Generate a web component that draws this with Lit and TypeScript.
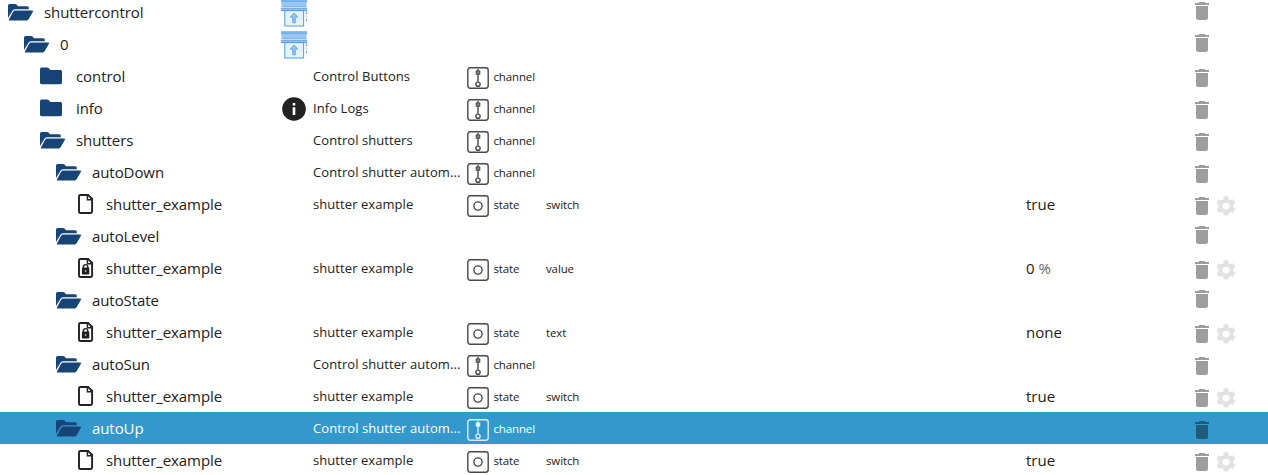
import { LitElement, html, svg, css, nothing } from "lit";
import { customElement } from "lit/decorators.js";
import { classMap } from "lit/directives/class-map.js";
import { styleMap } from "lit/directives/style-map.js";

type Kind = "open" | "closed" | "file" | "locked";

interface Row {
  id: string;
  kind: Kind;
  depth: number;
  icon?: "shutter" | "info";
  name?: string;
  type?: "channel" | "state";
  role?: string;
  value?: string;
  unit?: string;
  selected?: boolean;
}

const AUTOM = "Control shutter autom...";

const leaf = (role: string, value: string, kind: Kind = "file", unit = ""): Row => ({
  id: "shutter_example", kind, depth: 4, name: "shutter example", type: "state", role, value, unit,
});

const ROWS: Row[] = [
  { id: "shuttercontrol", kind: "open", depth: 0, icon: "shutter" },
  { id: "0", kind: "open", depth: 1, icon: "shutter" },
  { id: "control", kind: "closed", depth: 2, name: "Control Buttons", type: "channel" },
  { id: "info", kind: "closed", depth: 2, icon: "info", name: "Info Logs", type: "channel" },
  { id: "shutters", kind: "open", depth: 2, name: "Control shutters", type: "channel" },
  { id: "autoDown", kind: "open", depth: 3, name: AUTOM, type: "channel" },
  leaf("switch", "true"),
  { id: "autoLevel", kind: "open", depth: 3 },
  leaf("value", "0", "locked", "%"),
  { id: "autoState", kind: "open", depth: 3 },
  leaf("text", "none", "locked"),
  { id: "autoSun", kind: "open", depth: 3, name: AUTOM, type: "channel" },
  leaf("switch", "true"),
  { id: "autoUp", kind: "open", depth: 3, name: AUTOM, type: "channel", selected: true },
  leaf("switch", "true"),
];

const folderOpen = html`<svg class="folder" width="26" height="18" viewBox="0 0 26 18">
  <path d="M0 14V1.6Q0 0 1.6 0H7.2Q8.2 0 8.8 .8L10 2.2H19.4Q20.8 2.2 20.8 3.8V5.2H7.2Q5.2 5.2 4.2 6.9Z" />
  <path d="M7.4 6.5H24.2Q25.5 6.5 24.9 7.7L20.8 15Q20.1 16.4 18.6 16.4H1.6Q.4 16.4 1 15.2L5 7.9Q5.8 6.5 7.4 6.5Z" />
</svg>`;

const folderClosed = html`<svg class="folder" width="26" height="18" viewBox="0 0 26 18">
  <path d="M1.6 -.4H7.4Q8.4 -.4 9 .4L10.4 1.9H20.4Q22 1.9 22 3.5V14.6Q22 16.2 20.4 16.2H1.6Q0 16.2 0 14.6V1.2Q0 -.4 1.6 -.4Z" />
</svg>`;

const file = (locked: boolean) => html`<svg class="file" width="16" height="20" viewBox="0 0 16 20">
  <path class="line" d="M2.4 1H10.2L14.1 5V17.6Q14.1 19 12.7 19H2.4Q1 19 1 17.6V2.4Q1 1 2.4 1Z" />
  <path class="line thin" d="M9.4 1V5.8H14" />
  ${locked
    ? svg`<rect x="3.9" y="9.6" width="7.4" height="6.8" rx="1" />
        <path class="line thin" d="M5.4 10V8.8a2.2 2.2 0 0 1 4.4 0V10" />
        <circle class="hole" cx="7.6" cy="13" r=".8" />`
    : nothing}
</svg>`;

const shutter = html`<svg class="shutter" width="28" height="28" viewBox="0 0 28 28">
  <rect x="4.8" y="11" width="18.8" height="16" fill="#e1f1fe" stroke="#5b9bdc" />
  <path d="M4.5 27.4H24" stroke="#a5cdf2" />
  <rect x="1" y=".4" width="26" height="2.8" fill="#8cc3f5" />
  <rect x="1.6" y="4.4" width="25" height="3" fill="#b5daf9" />
  <rect x="1" y="8.8" width="26" height="3" fill="#8cc3f5" />
  <path d="M1 .9H27M1.6 4.9H26.6M1 9.2H27" stroke="#5c9edf" stroke-width=".8" />
  <path d="M1 3H27M1.6 7.2H26.6M1 11.6H27" stroke="#4f93d8" stroke-width=".9" />
  <path d="M14 14L17.9 18.1H15.3V23.8H12.7V18.1H10.1Z" fill="#90c6f5" stroke="#5c9edf" stroke-width=".8" />
  <path d="M26.5 12.5V22.5" stroke="#6fa9e2" stroke-dasharray="3 2 1 1.5" />
</svg>`;

const info = html`<svg class="info" width="24" height="24" viewBox="0 0 24 24">
  <circle cx="12" cy="12" r="11.8" fill="#212121" />
  <path d="M10.7 6h2.6v2.6h-2.6zM10.7 10.2h2.6V18h-2.6z" fill="#fff" />
</svg>`;

const typeIcon = (type: string) => html`<svg class="type-icon" width="22" height="22" viewBox="0 0 22 22">
  <rect class="stroke" x=".8" y=".8" width="20.4" height="20.4" rx="2.4" />
  ${type === "state"
    ? svg`<circle class="stroke" cx="11" cy="11" r="4.1" />`
    : svg`<path class="stroke" d="M11 2V14.8" />
        <rect class="knob" x="9.2" y="4" width="3.6" height="3.2" />
        <circle class="stroke" cx="11" cy="17.2" r="2.1" />`}
</svg>`;

const trash = html`<svg class="trash" width="24" height="24" viewBox="0 0 24 24">
  <path d="M6 19c0 1.1.9 2 2 2h8c1.1 0 2-.9 2-2V7H6v12zM19 4h-3.5l-1-1h-5l-1 1H5v2h14V4z" />
</svg>`;

const gear = html`<svg class="gear" width="24" height="24" viewBox="0 0 24 24">
  <path d="M19.14 12.94c.04-.3.06-.61.06-.94 0-.32-.02-.64-.07-.94l2.03-1.58c.18-.14.23-.41.12-.61l-1.92-3.32c-.12-.22-.37-.29-.59-.22l-2.39.96c-.5-.38-1.03-.7-1.62-.94l-.36-2.54c-.04-.24-.24-.41-.48-.41h-3.84c-.24 0-.43.17-.47.41l-.36 2.54c-.59.24-1.13.57-1.62.94l-2.39-.96c-.22-.08-.47 0-.59.22L2.74 8.87c-.12.21-.08.47.12.61l2.03 1.58c-.05.3-.09.63-.09.94s.02.64.07.94l-2.03 1.58c-.18.14-.23.41-.12.61l1.92 3.32c.12.22.37.29.59.22l2.39-.96c.5.38 1.03.7 1.62.94l.36 2.54c.05.24.24.41.48.41h3.84c.24 0 .44-.17.47-.41l.36-2.54c.59-.24 1.13-.56 1.62-.94l2.39.96c.22.08.47 0 .59-.22l1.92-3.32c.12-.22.07-.47-.12-.61l-2.01-1.58zM12 15.6c-1.98 0-3.6-1.62-3.6-3.6s1.62-3.6 3.6-3.6 3.6 1.62 3.6 3.6-1.62 3.6-3.6 3.6z" />
</svg>`;

@customElement("app-root")
export class AppRoot extends LitElement {
  static styles = css`
    :host {
      display: block;
      height: 475px;
      overflow: hidden;
      background: #fff;
      color: #212121;
      font-family: "Open Sans", "Noto Sans", sans-serif;
    }
    .tree { margin-top: -4px; }
    .row {
      display: grid;
      grid-template-columns: 280px 33px 154px 79px 480px 164px 1fr;
      height: 32px;
      line-height: 32px;
      white-space: nowrap;
    }
    .row > div { display: flex; align-items: flex-start; min-width: 0; }
    svg { flex: none; display: block; }
    .id { font-size: 15px; letter-spacing: -0.08px; }
    .folder { margin: 8px 10px 0 8px; fill: #164477; overflow: visible; }
    .file { margin: 6px 12px 0 14px; fill: #212121; }
    .line { fill: none; stroke: #212121; stroke-width: 1.9; }
    .thin { stroke-width: 1.4; }
    .hole { fill: #fff; }
    .shutter { margin-top: 3px; }
    .info { margin: 5px 0 0 2px; }
    .name { font-size: 13px; letter-spacing: 0.07px; }
    .type, .role { font-size: 11.5px; line-height: 34px; letter-spacing: -0.12px; }
    .type-icon { margin: 7px 4.4px 0 0; color: #484848; }
    .stroke { fill: none; stroke: currentColor; stroke-width: 1.4; }
    .knob { fill: #888; stroke: currentColor; }
    .value { font-size: 15px; gap: 4px; }
    .unit { color: #666; }
    .trash { margin-top: 3px; fill: #9e9e9e; }
    .typed .trash { margin-top: 6px; }
    .gear { margin-top: 6px; fill: #e2e2e2; }
    .buttons { line-height: 0; }
    .selected { background: #3399cc; color: #fff; }
    .selected .type-icon { color: #d6ebf5; }
    .selected .knob { fill: #fff; }
    .selected .trash { fill: #1f5c7a; }
  `;

  private nodeIcon(kind: Kind) {
    if (kind === "open") return folderOpen;
    if (kind === "closed") return folderClosed;
    return file(kind === "locked");
  }

  private row(r: Row) {
    return html`<div class=${classMap({ row: true, typed: !!r.type, selected: !!r.selected })}>
      <div class="id" style=${styleMap({ paddingLeft: `${r.depth * 16}px` })}>${this.nodeIcon(r.kind)}<span>${r.id}</span></div>
      <div>${r.icon === "shutter" ? shutter : r.icon === "info" ? info : nothing}</div>
      <div class="name">${r.name ?? nothing}</div>
      <div class="type">${r.type ? html`${typeIcon(r.type)}<span>${r.type}</span>` : nothing}</div>
      <div class="role">${r.role ?? nothing}</div>
      <div class="value">${r.value ?? nothing}${r.unit ? html`<span class="unit">${r.unit}</span>` : nothing}</div>
      <div class="buttons">${trash}${r.type === "state" ? gear : nothing}</div>
    </div>`;
  }

  render() {
    return html`<div class="tree">${ROWS.map((r) => this.row(r))}</div>`;
  }
}
